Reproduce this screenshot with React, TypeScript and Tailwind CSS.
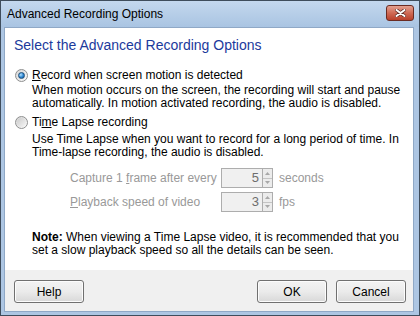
import React from "react";

function Radio({ checked }: { checked?: boolean }) {
  return (
    <span className="flex h-[13px] w-[13px] shrink-0 items-center justify-center rounded-full border border-[#8e8f8f] bg-gradient-to-br from-[#d6d6d6] to-[#fbfbfb]">
      {checked ? (
        <span className="h-[7px] w-[7px] rounded-full border border-[#1d4f7c] bg-[radial-gradient(circle_at_35%_35%,#b5e2ff,#2c86d2_55%,#16508c)]" />
      ) : (
        <span className="h-[9px] w-[9px] rounded-full bg-gradient-to-br from-[#cbcbcb] to-[#f6f6f6]" />
      )}
    </span>
  );
}

function Arrow({ up }: { up?: boolean }) {
  return (
    <svg width="5" height="3" viewBox="0 0 5 3">
      <path d={up ? "M2.5 0 L5 3 L0 3 Z" : "M0 0 L5 0 L2.5 3 Z"} fill="#a8a8a8" />
    </svg>
  );
}

function SpinBox({ value }: { value: string }) {
  return (
    <div className="flex h-[20px] w-[52px] border border-[#adadad] bg-[#f0f0f0]">
      <span className="flex flex-1 items-center justify-end pr-[3px] text-[13px] text-[#6d6d6d]">
        {value}
      </span>
      <div className="flex w-[10px] flex-col border-l border-[#adadad]">
        <span className="flex flex-1 items-center justify-center border-b border-[#c4c4c4] bg-[#ececec]">
          <Arrow up />
        </span>
        <span className="flex flex-1 items-center justify-center bg-[#ececec]">
          <Arrow />
        </span>
      </div>
    </div>
  );
}

function Btn({ children }: { children: React.ReactNode }) {
  return (
    <button className="h-[23px] w-[70px] rounded-[3px] border border-[#707070] bg-gradient-to-b from-[#f3f3f3] via-[#ebebeb] to-[#d8d8d8] text-[12px] text-black shadow-[inset_0_0_0_1px_#fcfcfc]">
      {children}
    </button>
  );
}

export default function App() {
  return (
    <div className="flex h-[316px] w-[420px] flex-col border border-[#3f4d5c] bg-[#adc6e3] font-['Liberation_Sans',Arial,sans-serif] text-[12px] text-black">
      <div className="flex h-[26px] shrink-0 items-start justify-between bg-gradient-to-b from-[#c4d8ee] to-[#a9c4e2] pl-[6px] pr-[5px]">
        <span className="mt-[6px] leading-[14px]">Advanced Recording Options</span>
        <span className="mt-[4px] flex h-[16px] w-[28px] items-center justify-center rounded-[3px] border border-[#6b2b22] bg-gradient-to-b from-[#e3a090] via-[#cf6a55] to-[#b8402b]">
          <svg width="11" height="8" viewBox="0 0 11 8">
            <path d="M1.5 1 L9.5 7 M9.5 1 L1.5 7" stroke="#5b2a24" strokeWidth="3.4" strokeLinecap="round" />
            <path d="M1.5 1 L9.5 7 M9.5 1 L1.5 7" stroke="#ffffff" strokeWidth="2" strokeLinecap="round" />
          </svg>
        </span>
      </div>

      <div className="ml-[3px] mr-[5px] mb-[3px] flex flex-1 flex-col border border-[#8fa8c6]">
        <div className="flex flex-1 flex-col bg-white pl-[9px]">
          <h1 className="mt-[8px] text-[14px] leading-[18px] text-[#1c3a9c]">
            Select the Advanced Recording Options
          </h1>

          <div className="mt-[14px] flex h-[14px] items-center gap-[4px] pl-[1px]">
            <Radio checked />
            <span>
              <span className="underline">R</span>ecord when screen motion is detected
            </span>
          </div>
          <p className="mt-[2px] pl-[18px] leading-[13px]">
            When motion occurs on the screen, the recording will start and pause
            <br />
            automatically. In motion activated recording, the audio is disabled.
          </p>

          <div className="mt-[5px] flex h-[14px] items-center gap-[4px] pl-[1px]">
            <Radio />
            <span>
              Ti<span className="underline">m</span>e Lapse recording
            </span>
          </div>
          <p className="mt-[4px] pl-[18px] leading-[13px]">
            Use Time Lapse when you want to record for a long period of time. In
            <br />
            Time-lapse recording, the audio is disabled.
          </p>

          <div className="mt-[9px] flex h-[20px] items-center pl-[56px] text-[#999999]">
            <span className="w-[151px]">
              Capture 1 <span className="underline">f</span>rame after every
            </span>
            <SpinBox value="5" />
            <span className="ml-[6px]">seconds</span>
          </div>
          <div className="mt-[4px] flex h-[20px] items-center pl-[56px] text-[#999999]">
            <span className="w-[151px]">
              <span className="underline">P</span>layback speed of video
            </span>
            <SpinBox value="3" />
            <span className="ml-[6px]">fps</span>
          </div>

          <p className="mt-[19px] pl-[18px] leading-[13px]">
            <span className="font-bold">Note:</span> When viewing a Time Lapse video, it is recommended that you
            <br />
            set a slow playback speed so all the details can be seen.
          </p>
        </div>

        <div className="flex h-[41px] shrink-0 items-start justify-between bg-[#f0f0f0] pl-[9px] pr-[7px] pt-[10px]">
          <Btn>Help</Btn>
          <div className="flex gap-[9px]">
            <Btn>OK</Btn>
            <Btn>Cancel</Btn>
          </div>
        </div>
      </div>
    </div>
  );
}
